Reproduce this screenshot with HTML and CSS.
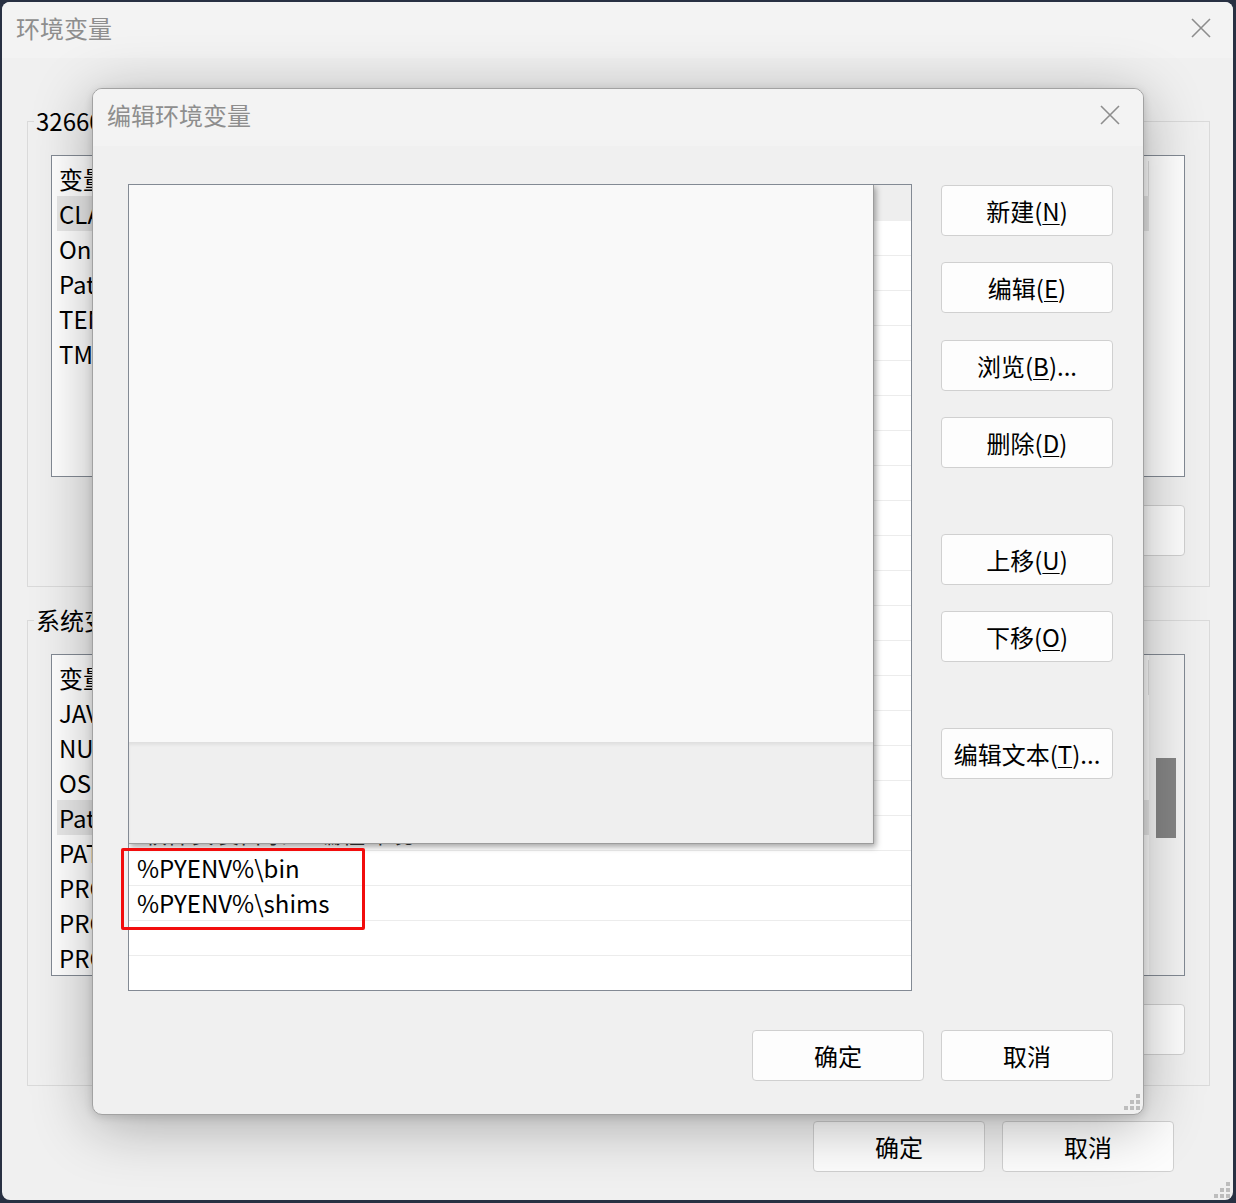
FILE: index.html
```html
<!DOCTYPE html>
<html lang="zh-CN">
<head>
<meta charset="utf-8">
<title>编辑环境变量</title>
<link rel="stylesheet" href="styles.css">
</head>
<body>
<div class="win">
  <div class="wtitle">
    <span class="ttext">环境变量</span>
    <svg class="xicon" width="20" height="20" viewBox="0 0 20 20"><path d="M1 1L19 19M19 1L1 19" stroke="#8d8d8d" stroke-width="1.6" fill="none"/></svg>
  </div>
  <div class="wbody">
    <section class="group">
      <div class="legend">32660 的用户变量(<u>U</u>)</div>
      <div class="vlist">
        <div class="vcols">
          <div class="vhead"><span class="c1">变量</span><span class="c2">值</span></div>
          <div class="vrow sel"><span class="c1">CLASSPATH</span><span class="c2">.;%JAVA_HOME%\lib</span></div>
          <div class="vrow"><span class="c1">OneDrive</span><span class="c2">C:\Users\32660\OneDrive</span></div>
          <div class="vrow"><span class="c1">Path</span><span class="c2">%PYENV%\bin;%PYENV%\shims</span></div>
          <div class="vrow"><span class="c1">TEMP</span><span class="c2">%USERPROFILE%\AppData\Local\Temp</span></div>
          <div class="vrow"><span class="c1">TMP</span><span class="c2">%USERPROFILE%\AppData\Local\Temp</span></div>
        </div>
        <div class="vside"></div>
      </div>
      <div class="gbtns">
        <div class="btn">新建(<u>N</u>)...</div>
        <div class="btn">编辑(<u>E</u>)...</div>
        <div class="btn">删除(<u>D</u>)</div>
      </div>
    </section>
    <section class="group g2">
      <div class="legend">系统变量(<u>S</u>)</div>
      <div class="vlist">
        <div class="vcols">
          <div class="vhead"><span class="c1">变量</span><span class="c2">值</span></div>
          <div class="vrow"><span class="c1">JAVA_HOME</span><span class="c2">C:\Program Files\Java\jdk</span></div>
          <div class="vrow"><span class="c1">NUMBER_OF_PROCESSORS</span><span class="c2">16</span></div>
          <div class="vrow"><span class="c1">OS</span><span class="c2">Windows_NT</span></div>
          <div class="vrow sel"><span class="c1">Path</span><span class="c2">C:\Windows\system32;C:\Windows</span></div>
          <div class="vrow"><span class="c1">PATHEXT</span><span class="c2">.COM;.EXE;.BAT;.CMD</span></div>
          <div class="vrow"><span class="c1">PROCESSOR_ARCHITECTURE</span><span class="c2">AMD64</span></div>
          <div class="vrow"><span class="c1">PROCESSOR_IDENTIFIER</span><span class="c2">Intel64 Family 6</span></div>
          <div class="vrow"><span class="c1">PROCESSOR_LEVEL</span><span class="c2">6</span></div>
        </div>
        <div class="vside scroll"><div class="thumb"></div></div>
      </div>
      <div class="gbtns">
        <div class="btn">新建(<u>W</u>)...</div>
        <div class="btn">编辑(<u>I</u>)...</div>
        <div class="btn">删除(<u>L</u>)</div>
      </div>
    </section>
    <div class="wfoot">
      <div class="btn">确定</div>
      <div class="btn">取消</div>
    </div>
  </div>
  <svg class="grip wgrip" width="16" height="16" viewBox="0 0 16 16"><g fill="#bdbdbd"><rect x="12" y="0" width="4" height="4"/><rect x="6" y="6" width="4" height="4"/><rect x="12" y="6" width="4" height="4"/><rect x="0" y="12" width="4" height="4"/><rect x="6" y="12" width="4" height="4"/><rect x="12" y="12" width="4" height="4"/></g></svg>

  <div class="dlg">
    <div class="dtitle">
      <span class="ttext">编辑环境变量</span>
      <svg class="xicon" width="20" height="20" viewBox="0 0 20 20"><path d="M1 1L19 19M19 1L1 19" stroke="#8d8d8d" stroke-width="1.6" fill="none"/></svg>
    </div>
    <div class="dbody">
      <div class="plist">
        <div class="prow first"></div>
        <div class="prow">C:\Windows\system32</div>
        <div class="prow">C:\Windows</div>
        <div class="prow">C:\Windows\System32\Wbem</div>
        <div class="prow">C:\Windows\System32\WindowsPowerShell\v1.0\</div>
        <div class="prow">C:\Windows\System32\OpenSSH\</div>
        <div class="prow">C:\Program Files\Git\cmd</div>
        <div class="prow">C:\Program Files\nodejs\</div>
        <div class="prow">%JAVA_HOME%\bin</div>
        <div class="prow">C:\Program Files\Docker\Docker\resources\bin</div>
        <div class="prow">C:\Program Files\dotnet\</div>
        <div class="prow">%USERPROFILE%\AppData\Local\Microsoft\WindowsApps</div>
        <div class="prow">%USERPROFILE%\.dotnet\tools</div>
        <div class="prow">C:\Users\32660\AppData\Roaming\npm</div>
        <div class="prow">C:\Program Files\Microsoft VS Code\bin</div>
        <div class="prow">C:\Program Files\MySQL\bin</div>
        <div class="prow">C:\Program Files\CMake\bin</div>
        <div class="prow">C:\Program Files\Go\bin</div>
        <div class="prow part"><span>软件安装目录</span><span class="gap">编程环境</span></div>
        <div class="prow">%PYENV%\bin</div>
        <div class="prow">%PYENV%\shims</div>
        <div class="prow"></div>
        <div class="prow"></div>
        <div class="popup">
          <div class="ptop"></div>
          <div class="pbot"></div>
        </div>
      </div>
      <div class="bcol">
        <div class="btn">新建(<u>N</u>)</div>
        <div class="btn">编辑(<u>E</u>)</div>
        <div class="btn">浏览(<u>B</u>)...</div>
        <div class="btn">删除(<u>D</u>)</div>
        <div class="btn sp">上移(<u>U</u>)</div>
        <div class="btn">下移(<u>O</u>)</div>
        <div class="btn sp">编辑文本(<u>T</u>)...</div>
      </div>
    </div>
    <div class="dfoot">
      <div class="btn">确定</div>
      <div class="btn">取消</div>
    </div>
    <div class="mark"></div>
    <svg class="grip dgrip" width="16" height="16" viewBox="0 0 16 16"><g fill="#bdbdbd"><rect x="12" y="0" width="4" height="4"/><rect x="6" y="6" width="4" height="4"/><rect x="12" y="6" width="4" height="4"/><rect x="0" y="12" width="4" height="4"/><rect x="6" y="12" width="4" height="4"/><rect x="12" y="12" width="4" height="4"/></g></svg>
  </div>
</div>
</body>
</html>
```

FILE: styles.css
```css
* { box-sizing: border-box; }
html, body { margin: 0; padding: 0; }
body {
  background: #283042;
  width: 1236px;
  height: 1203px;
  overflow: hidden;
  font-family: "Noto Sans CJK SC", "Noto Sans", sans-serif;
  font-size: 24px;
  color: #000;
}
u { text-decoration-thickness: 1px; text-underline-offset: 3px; }

.win {
  position: relative;
  margin: 2px 0 0 2px;
  width: 1231px;
  height: 1198px;
  background: #f0f0f0;
  border-radius: 8px;
  overflow: hidden;
}
.wtitle {
  height: 56px;
  background: #f3f3f3;
  display: flex;
  align-items: center;
  justify-content: space-between;
  padding: 0 22px 4px 14px;
}
.ttext { color: #8e8e8e; line-height: 30px; }
.xicon { display: block; }

.wbody { padding: 0 23px 0 25px; }
.group {
  margin-top: 63px;
  border: 1px solid #dadada;
  padding: 0 24px 30px 23px;
}
.group.g2 { margin-top: 33px; }
.legend {
  width: fit-content;
  white-space: nowrap;
  margin: -16px 0 -14px -17px;
  padding: 0 2px;
  line-height: 30px;
  background: #f0f0f0;
}
.vlist {
  margin-top: 33px;
  height: 322px;
  border: 1px solid #838a94;
  background: #fff;
  display: flex;
  overflow: hidden;
}
.vcols { flex: 1; padding: 5px 0 0 5px; }
.vside { width: 35px; }
.vside.scroll { background: #f4f4f4; padding: 103px 0 0 7px; }
.thumb { width: 20px; height: 80px; background: #858585; }
.vhead, .vrow {
  display: flex;
  height: 35px;
  line-height: 35px;
  padding-left: 2px;
  white-space: nowrap;
}
.vhead { border-right: 1px solid #e2e2e2; }
.vrow.sel { background: #e8e8e8; }
.c1 { width: 420px; }
.c2 { flex: 1; }

.gbtns {
  margin-top: 28px;
  display: flex;
  justify-content: flex-end;
  gap: 17px;
}
.btn {
  width: 172px;
  height: 51px;
  border: 1px solid #d0d0d0;
  border-radius: 4px;
  background: #fdfdfd;
  display: flex;
  align-items: center;
  justify-content: center;
  line-height: 1;
  white-space: nowrap;
}
.wfoot {
  margin: 35px 36px 0 0;
  display: flex;
  justify-content: flex-end;
  gap: 17px;
}
.grip { position: absolute; display: block; }
.wgrip { right: 3px; bottom: 2px; }

/* inner dialog */
.dlg {
  position: absolute;
  left: 90px;
  top: 86px;
  width: 1052px;
  height: 1027px;
  border: 1px solid #a2a2a2;
  border-radius: 10px;
  background: #f0f0f0;
  box-shadow: 0 10px 60px rgba(0, 0, 0, 0.3), 0 2px 8px rgba(0, 0, 0, 0.14);
  overflow: hidden;
}
.dtitle {
  height: 57px;
  background: #f3f3f3;
  display: flex;
  align-items: center;
  justify-content: space-between;
  padding: 0 23px 6px 14px;
}
.dbody {
  display: flex;
  padding: 38px 30px 0 35px;
}
.plist {
  position: relative;
  width: 784px;
  height: 807px;
  border: 1px solid #838a94;
  background: #fff;
  overflow: hidden;
}
.prow {
  height: 35px;
  line-height: 34px;
  padding-left: 8px;
  border-bottom: 1px solid #ececec;
  white-space: nowrap;
}
.prow.first { height: 36px; background: #eeeeee; border-bottom: none; }
.prow.part { padding-left: 14px; color: #333; }
.prow.part .gap { margin-left: 30px; }
.popup {
  position: absolute;
  left: -1px;
  top: -1px;
  width: 746px;
  height: 660px;
  border: 1px solid #9c9c9c;
  box-shadow: 2px 3px 6px rgba(0, 0, 0, 0.35);
  display: flex;
  flex-direction: column;
}
.ptop { height: 557px; background: #f9f9f9; }
.pbot {
  flex: 1;
  background: #efefef;
  border-top: 1px solid #e0e0e0;
  box-shadow: inset 0 2px 3px rgba(0, 0, 0, 0.06);
}
.bcol {
  margin-left: 29px;
  margin-top: 1px;
  display: flex;
  flex-direction: column;
  gap: 26px;
}
.bcol .btn:nth-child(3) { margin-top: 1px; }
.bcol .btn.sp { margin-top: 40px; }
.dfoot {
  margin-top: 39px;
  padding-right: 30px;
  display: flex;
  justify-content: flex-end;
  gap: 17px;
}
.mark {
  position: absolute;
  left: 28px;
  top: 759px;
  width: 244px;
  height: 82px;
  border: 3px solid #f20d0d;
  border-radius: 2px;
}
.dgrip { right: 3px; bottom: 4px; }
```
